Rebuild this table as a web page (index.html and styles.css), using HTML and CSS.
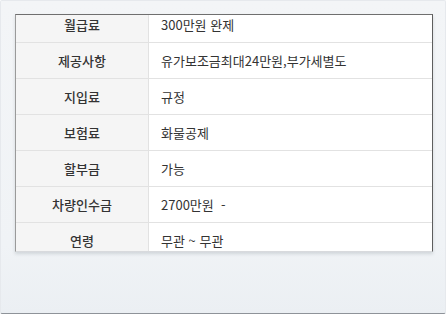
FILE: index.html
```html
<!DOCTYPE html>
<html lang="ko">

<head>
    <meta charset="UTF-8">
    <title>차량 정보</title>
    <link rel="stylesheet" href="styles.css">
</head>

<body>
    <div class="frame">
        <div class="viewport">
            <table class="info">
                <tr><th>월급료</th><td>300만원 완제</td></tr>
                <tr><th>제공사항</th><td>유가보조금최대24만원,부가세별도</td></tr>
                <tr><th>지입료</th><td>규정</td></tr>
                <tr><th>보험료</th><td>화물공제</td></tr>
                <tr><th>할부금</th><td>가능</td></tr>
                <tr><th>차량인수금</th><td>2700만원&nbsp; -</td></tr>
                <tr><th>연령</th><td>무관 ~ 무관</td></tr>
            </table>
        </div>
    </div>
</body>

</html>
```

FILE: styles.css
```css
* {
    font-family: "Noto Sans CJK KR", "Noto Sans", sans-serif;
}

body {
    margin: 0;
}

.frame {
    box-sizing: border-box;
    width: 446px;
    height: 314px;
    padding: 13px 14px 0 14px;
    background: linear-gradient(#f3f5f7 0%, #f0f3f6 78%, #ebeff3 100%);
    border: 1px solid #e6e9ed;
    border-bottom: 1px solid #8e9399;
    border-radius: 2px;
}

.viewport {
    width: 416px;
    height: 236px;
    overflow: hidden;
    background: #fff;
    border: 1px solid #9a9a9a;
    border-top-color: #6f6f6f;
    border-right-color: #5e5e5e;
    border-bottom-color: #d8dadd;
    box-shadow: 0 2px 3px rgba(120, 130, 140, 0.25);
}

.info {
    width: 100%;
    margin-top: -8px;
    border-collapse: collapse;
    font-size: 13px;
    color: #333;
}

.info th,
.info td {
    height: 35px;
    padding: 0;
    border-bottom: 1px solid #e2e2e2;
}

.info th {
    width: 132px;
    background: #f5f5f5;
    border-right: 1px solid #e2e2e2;
    font-weight: 500;
    color: #333;
    text-align: center;
}

.info td {
    padding-left: 12px;
    text-align: left;
}
```
